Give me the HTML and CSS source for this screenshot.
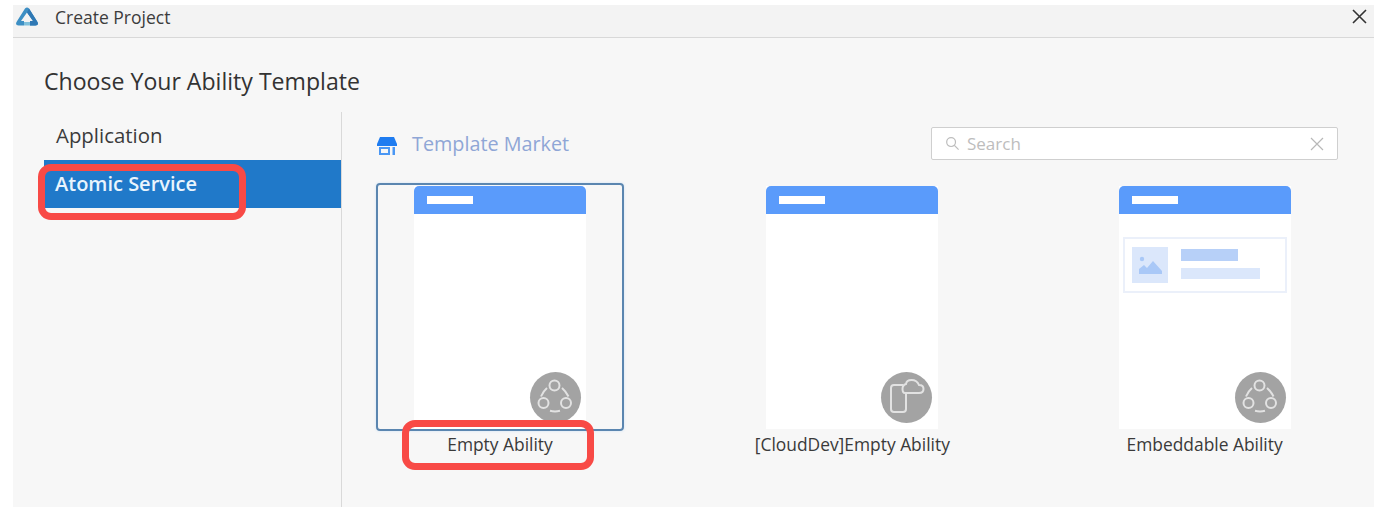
FILE: index.html
```html
<!DOCTYPE html>
<html lang="en">
<head>
<meta charset="utf-8">
<title>Create Project</title>
<link rel="stylesheet" href="styles.css">
</head>
<body>
<div class="window">
  <header class="titlebar">
    <svg class="logo" viewBox="0 0 22 19" width="22" height="19">
      <path d="M9 1.5 Q11 -0.5 13 1.5 L21.5 15 Q23 18.5 19.5 18.5 H14 V14 H17 L11 5.5 L5 14 H8 V18.5 H2.5 Q-1 18.5 0.5 15Z" fill="#3d8fc4"/>
      <path d="M13 1.5 L21.5 15 Q23 18.5 19.5 18.5 H14 V14 H17 L11 5.5 Z" fill="#2f78b4"/>
      <path d="M8 18.5 H14 V15 H8Z" fill="#7fc0dc"/>
    </svg>
    <span class="window-title">Create Project</span>
    <svg class="close" viewBox="0 0 15 15" width="15" height="15"><path d="M1 1 L14 14 M14 1 L1 14" stroke="#333" stroke-width="1.6" fill="none"/></svg>
  </header>
  <div class="content">
    <h1 class="heading">Choose Your Ability Template</h1>
    <div class="columns">
      <nav class="sidebar">
        <div class="side-item">Application</div>
        <div class="side-item selected">Atomic Service</div>
      </nav>
      <main class="main">
        <div class="market-row">
          <svg class="store" viewBox="0 0 20 18" width="20" height="18">
            <path d="M3 0 H17 L20 7 V9 H0 V7Z" fill="#1f7cf0"/>
            <path d="M2 10 H13 V18 H2Z M4 12 V16 H11 V12Z" fill="#4a97f4" fill-rule="evenodd"/>
            <path d="M15.5 10 H18 V18 H15.5Z" fill="#4a97f4"/>
          </svg>
          <span class="market-label">Template Market</span>
          <div class="search">
            <svg viewBox="0 0 16 16" width="15" height="15"><circle cx="6.5" cy="6.5" r="4.7" fill="none" stroke="#bdbdbd" stroke-width="1.3"/><path d="M10 10 L14.5 14.5" stroke="#bdbdbd" stroke-width="1.3"/></svg>
            <span class="search-text">Search</span>
            <svg class="search-clear" viewBox="0 0 14 14" width="14" height="14"><path d="M1 1 L13 13 M13 1 L1 13" stroke="#b8b8b8" stroke-width="1.2" fill="none"/></svg>
          </div>
        </div>
        <div class="cards">
          <div class="card active">
            <div class="thumb">
              <div class="thumb-head"><span class="thumb-bar"></span></div>
              <div class="badge">
                <svg viewBox="0 0 51 51" width="51" height="51"><use href="#ring"/></svg>
              </div>
            </div>
            <div class="card-label">Empty Ability</div>
          </div>
          <div class="card">
            <div class="thumb">
              <div class="thumb-head"><span class="thumb-bar"></span></div>
              <div class="badge badge-cloud">
                <svg viewBox="0 0 51 51" width="51" height="51">
                  <path d="M22 13 H13 Q10 13 10 16 V37 Q10 40 13 40 H22 Q25 40 25 37 V22" fill="none" stroke="#e2e2e2" stroke-width="2"/>
                  <path d="M24 21 H38 Q42.5 21 42.5 17 Q42.5 13 38 13 Q36 8 30.5 8 Q25.5 8 25 12 Q21.5 13 21.5 17 Q21.5 21 24 21Z" fill="#a3a3a3" stroke="#e2e2e2" stroke-width="2"/>
                </svg>
              </div>
            </div>
            <div class="card-label">[CloudDev]Empty Ability</div>
          </div>
          <div class="card">
            <div class="thumb">
              <div class="thumb-head"><span class="thumb-bar"></span></div>
              <div class="embed-box">
                <div class="embed-image">
                  <svg viewBox="0 0 36 36" width="36" height="36">
                    <circle cx="10" cy="12" r="2.2" fill="#a9c8f7"/>
                    <path d="M7 27 V22 L12 18 L15 21 L21 14 L30 24 V27Z" fill="#a9c8f7"/>
                  </svg>
                </div>
                <div class="embed-lines">
                  <span class="line-one"></span>
                  <span class="line-two"></span>
                </div>
              </div>
              <div class="badge">
                <svg viewBox="0 0 51 51" width="51" height="51"><use href="#ring"/></svg>
              </div>
            </div>
            <div class="card-label">Embeddable Ability</div>
          </div>
        </div>
      </main>
    </div>
  </div>
</div>
<div class="mark mark-service"></div>
<div class="mark mark-empty"></div>
<svg class="defs" width="0" height="0">
  <defs>
    <g id="ring" fill="none" stroke="#e2e2e2" stroke-width="2">
      <circle cx="24.5" cy="13.5" r="5"/>
      <circle cx="13.5" cy="31" r="5"/>
      <circle cx="36" cy="31" r="5"/>
      <path d="M11 24.5 Q13 19.5 17 16 M32 16 Q36 19.5 38.5 24.5 M20 38.8 Q25 40 30 38.8"/>
    </g>
  </defs>
</svg>
</body>
</html>
```
FILE: styles.css
```css
* { box-sizing: border-box; }
html, body { margin: 0; height: 100%; }
body {
  background: #fff;
  width: 1384px;
  height: 518px;
  overflow: hidden;
  position: relative;
  padding: 5px 10px 11px 13px;
  font-family: "Open Sans", "Noto Sans", sans-serif;
  color: #333;
}
.window {
  height: 100%;
  display: flex;
  flex-direction: column;
  background: #f7f7f7;
}
.titlebar {
  height: 33px;
  flex: none;
  display: flex;
  align-items: center;
  background: #f3f3f3;
  border-bottom: 1px solid #d8d8d8;
  padding: 0 7px 9px 3px;
}
.logo { flex: none; }
.window-title {
  margin-left: 17px;
  font-size: 17.5px;
  color: #3c3c3c;
}
.close { margin-left: auto; }
.content {
  flex: 1;
  min-height: 0;
  display: flex;
  flex-direction: column;
  padding: 0 0 0 31px;
}
.heading {
  margin: 28px 0 0;
  height: 46px;
  font-size: 23.1px;
  line-height: 30px;
  font-weight: 400;
  color: #333;
}
.columns {
  flex: 1;
  min-height: 0;
  display: flex;
}
.sidebar {
  width: 298px;
  flex: none;
  border-right: 1px solid #d9d9d9;
}
.side-item {
  height: 48px;
  padding: 8px 0 0 12px;
  font-size: 20.4px;
  line-height: 30px;
  color: #3b3b3b;
}
.side-item.selected {
  padding: 9px 0 0 11px;
  font-size: 20px;
  background: #2079c9;
  color: #e9f4fd;
  font-weight: 600;
}
.main {
  flex: 1;
  min-width: 0;
  padding: 15px 36px 0 34px;
}
.market-row {
  display: flex;
  align-items: center;
  height: 33px;
}
.store { flex: none; margin: 5px 0 0 1px; }
.market-label {
  margin-left: 15px;
  font-size: 19.8px;
  color: #8fa6d6;
}
.search {
  margin-left: auto;
  width: 407px;
  height: 33px;
  display: flex;
  align-items: center;
  padding: 0 13px;
  background: #fff;
  border: 1px solid #cfcfcf;
  border-radius: 2px;
}
.search-text {
  margin-left: 7px;
  font-size: 17px;
  color: #bdbdbd;
}
.search-clear { margin-left: auto; }
.cards {
  display: grid;
  grid-template-columns: repeat(3, 248px);
  column-gap: 104.3px;
  margin-top: 23px;
}
.card { display: flex; flex-direction: column; align-items: center; }
.thumb {
  position: relative;
  width: 172px;
  height: 248px;
  padding: 3px 0 2px;
  background: linear-gradient(#fff, #fff) content-box;
}
.card.active .thumb::before {
  content: "";
  position: absolute;
  left: -38px;
  right: -38px;
  top: 0;
  bottom: 0;
  border: 2px solid #5b86b0;
  border-radius: 4px;
  box-shadow: 0 0 3px #cfe3f7;
}
.thumb-head {
  height: 28px;
  background: #5a9bfb;
  border-radius: 5px 5px 0 0;
  padding: 10px 13px;
  display: flex;
}
.thumb-bar {
  width: 46px;
  height: 8px;
  background: #fff;
}
.badge {
  position: absolute;
  right: 5px;
  bottom: 8px;
  width: 51px;
  height: 51px;
  border-radius: 50%;
  background: #a3a3a3;
}
.badge-cloud { right: 6px; }
.badge svg { display: block; }
.card-label {
  margin-top: 1px;
  font-size: 17.4px;
  line-height: 24px;
  color: #3a3a3a;
  white-space: nowrap;
}
.embed-box {
  margin: 23px 4px 0;
  height: 56px;
  border: 2px solid #ebf0fa;
  padding: 8px 7px;
  display: flex;
}
.embed-image {
  width: 36px;
  height: 36px;
  background: #dbe7fb;
  flex: none;
}
.embed-image svg { display: block; }
.embed-lines {
  margin-left: 13px;
  padding-top: 2px;
  display: flex;
  flex-direction: column;
  gap: 7px;
}
.line-one { width: 57px; height: 12px; background: #b7d0f8; }
.line-two { width: 79px; height: 11px; background: #dbe7fb; }
.mark {
  position: absolute;
  border: 7px solid #f84a46;
  border-radius: 13px;
}
.mark-service { left: 38px; top: 164px; width: 208px; height: 56px; }
.mark-empty { left: 402px; top: 420px; width: 192px; height: 50px; }
.defs { position: absolute; }
```
